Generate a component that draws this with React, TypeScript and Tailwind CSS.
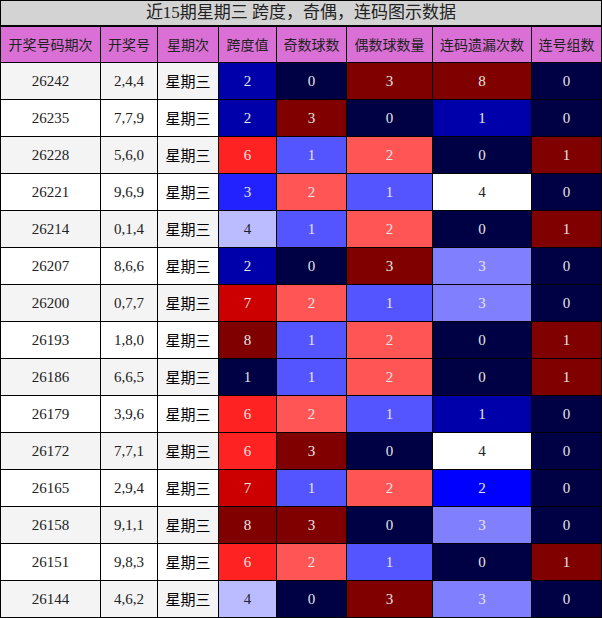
const rows: [string, string, number, number, number, number, number][] = [
  ["26242", "2,4,4", 2, 0, 3, 8, 0],
  ["26235", "7,7,9", 2, 3, 0, 1, 0],
  ["26228", "5,6,0", 6, 1, 2, 0, 1],
  ["26221", "9,6,9", 3, 2, 1, 4, 0],
  ["26214", "0,1,4", 4, 1, 2, 0, 1],
  ["26207", "8,6,6", 2, 0, 3, 3, 0],
  ["26200", "0,7,7", 7, 2, 1, 3, 0],
  ["26193", "1,8,0", 8, 1, 2, 0, 1],
  ["26186", "6,6,5", 1, 1, 2, 0, 1],
  ["26179", "3,9,6", 6, 2, 1, 1, 0],
  ["26172", "7,7,1", 6, 3, 0, 4, 0],
  ["26165", "2,9,4", 7, 1, 2, 2, 0],
  ["26158", "9,1,1", 8, 3, 0, 3, 0],
  ["26151", "9,8,3", 6, 2, 1, 0, 1],
  ["26144", "4,6,2", 4, 0, 3, 3, 0],
];

// 每列数值对应的底色
const spanColor: Record<number, string> = {
  1: "bg-[#000044] text-[#e6e6e6]",
  2: "bg-[#0000aa] text-[#e6e6e6]",
  3: "bg-[#2222ff] text-[#e6e6e6]",
  4: "bg-[#bbbbff] text-[#222]",
  6: "bg-[#ff2222] text-[#e6e6e6]",
  7: "bg-[#cc0000] text-[#e6e6e6]",
  8: "bg-[#800000] text-[#e6e6e6]",
};
const countColor: Record<number, string> = {
  0: "bg-[#000044] text-[#e6e6e6]",
  1: "bg-[#5555ff] text-[#e6e6e6]",
  2: "bg-[#ff5555] text-[#e6e6e6]",
  3: "bg-[#800000] text-[#e6e6e6]",
};
const missColor: Record<number, string> = {
  0: "bg-[#000044] text-[#e6e6e6]",
  1: "bg-[#0000aa] text-[#e6e6e6]",
  2: "bg-[#0000ff] text-[#e6e6e6]",
  3: "bg-[#8080ff] text-[#e6e6e6]",
  4: "bg-white text-[#222]",
  8: "bg-[#800000] text-[#e6e6e6]",
};
const linkColor: Record<number, string> = {
  0: "bg-[#000044] text-[#e6e6e6]",
  1: "bg-[#800000] text-[#e6e6e6]",
};

const grid =
  "grid grid-cols-[100px_57px_61px_58px_70px_86px_99px_70px] border-l border-black";
const cell = "flex items-center justify-center border-r border-b border-black";

const headers = ["开奖号码期次", "开奖号", "星期次", "跨度值", "奇数球数", "偶数球数量", "连码遗漏次数", "连号组数"];

export default function App() {
  return (
    <div className="w-[602px] bg-white font-['Liberation_Serif','Noto_Sans_CJK_SC',serif]">
      <div className="flex h-[27px] items-center justify-center border-t border-x border-b-2 border-black bg-[#d3d3d3] text-[17px] text-[#222] font-['Liberation_Serif','Noto_Sans_CJK_SC',sans-serif]">
        近15期星期三 跨度，奇偶，连码图示数据
      </div>
      <div className={`${grid} h-[36px] bg-[#da70d6]`}>
        {headers.map((h) => (
          <div key={h} className={`${cell} text-[14px] text-[#222] font-['Noto_Sans_CJK_SC',sans-serif]`}>
            {h}
          </div>
        ))}
      </div>
      {rows.map(([no, nums, span, odd, even, miss, link], i) => (
        <div key={no} className={`${grid} h-[37px] text-[15px] ${i % 2 === 0 ? "bg-[#f4f4f4]" : "bg-white"}`}>
          <div className={`${cell} text-[#222]`}>{no}</div>
          <div className={`${cell} text-[#222]`}>{nums}</div>
          <div className={`${cell} text-[15px] text-black font-['Noto_Sans_CJK_SC',sans-serif]`}>星期三</div>
          <div className={`${cell} ${spanColor[span]}`}>{span}</div>
          <div className={`${cell} ${countColor[odd]}`}>{odd}</div>
          <div className={`${cell} ${countColor[even]}`}>{even}</div>
          <div className={`${cell} ${missColor[miss]}`}>{miss}</div>
          <div className={`${cell} ${linkColor[link]}`}>{link}</div>
        </div>
      ))}
    </div>
  );
}
